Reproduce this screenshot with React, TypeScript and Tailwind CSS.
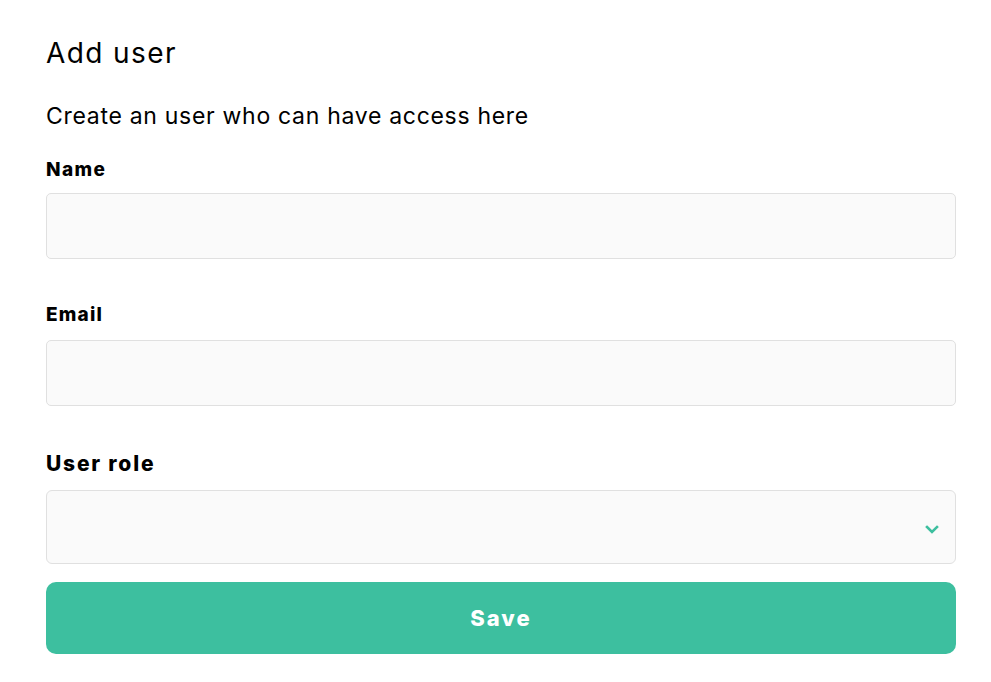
import React from "react";

export default function App() {
  return (
    <div className="min-h-screen bg-white pl-[46px] pr-[35px] pt-[35px] font-['Inter',sans-serif] text-black">
      <h1 className="text-[28px] leading-[36px] font-normal tracking-[1.4px]">Add user</h1>
      <p className="mt-[30px] text-[23px] leading-[30px] tracking-[0.7px]">Create an user who can have access here</p>

      <form onSubmit={(e) => e.preventDefault()}>
        <label className="mt-[26px] block text-[19px] leading-[26px] font-extrabold tracking-[1.4px]">Name</label>
        <input
          type="text"
          className="mt-[10px] block h-[66px] w-full rounded-[5px] border border-[#e0e0e0] bg-[#fafafa] px-4 outline-none"
        />

        <label className="mt-[43px] block text-[19px] leading-[26px] font-extrabold tracking-[1.2px]">Email</label>
        <input
          type="email"
          className="mt-[12px] block h-[66px] w-full rounded-[5px] border border-[#e0e0e0] bg-[#fafafa] px-4 outline-none"
        />

        <label className="mt-[43px] block text-[21px] leading-[30px] font-extrabold tracking-[1.8px]">User role</label>
        <div className="relative mt-[11px]">
          <select className="block h-[74px] w-full appearance-none rounded-[6px] border border-[#e0e0e0] bg-[#fafafa] px-4 outline-none" />
          <svg
            className="pointer-events-none absolute right-[17px] top-[35px]"
            width="14"
            height="9"
            viewBox="0 0 14 9"
            fill="none"
          >
            <polyline points="2,2 7,7 12,2" stroke="#3dbf9f" strokeWidth="2.6" strokeLinecap="square" />
          </svg>
        </div>

        <button
          type="submit"
          className="mt-[18px] block h-[72px] w-full rounded-[10px] bg-[#3dbf9f] text-[22px] font-extrabold tracking-[2px] text-white"
        >
          Save
        </button>
      </form>
    </div>
  );
}
